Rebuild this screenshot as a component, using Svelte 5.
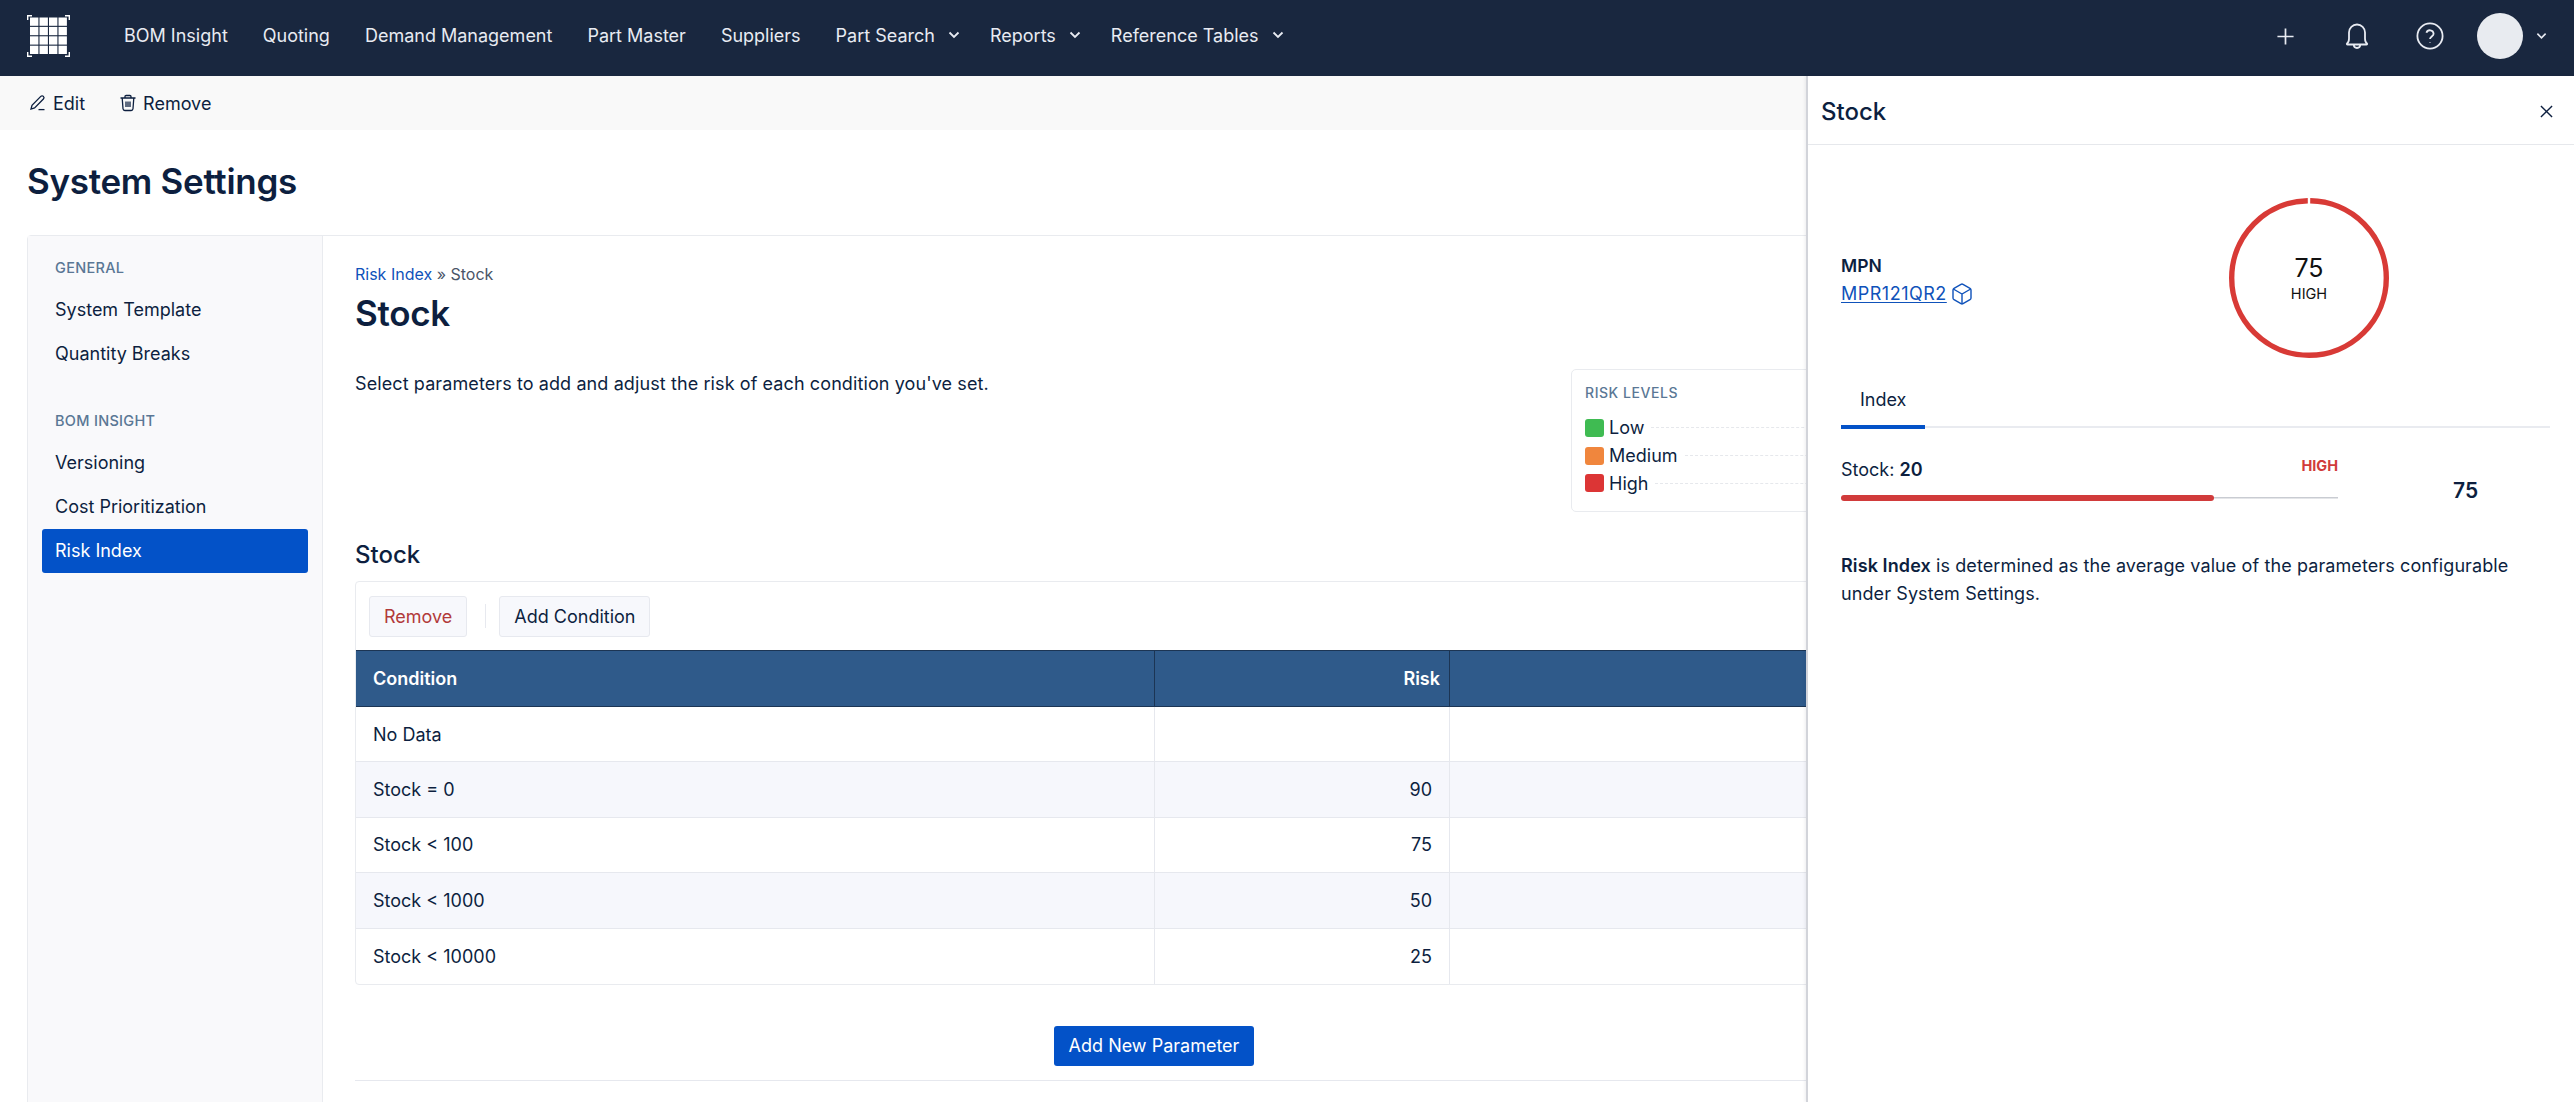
<script>
  const navItems = [
    { label: "BOM Insight" },
    { label: "Quoting" },
    { label: "Demand Management" },
    { label: "Part Master" },
    { label: "Suppliers" },
    { label: "Part Search", menu: true },
    { label: "Reports", menu: true },
    { label: "Reference Tables", menu: true },
  ];
  const sideGroups = [
    { title: "GENERAL", items: ["System Template", "Quantity Breaks"] },
    { title: "BOM INSIGHT", items: ["Versioning", "Cost Prioritization", "Risk Index"] },
  ];
  const levels = [
    { label: "Low", color: "#3fbb52" },
    { label: "Medium", color: "#f0863d" },
    { label: "High", color: "#dc3535" },
  ];
  const rows = [
    { condition: "No Data", risk: "" },
    { condition: "Stock = 0", risk: "90" },
    { condition: "Stock < 100", risk: "75" },
    { condition: "Stock < 1000", risk: "50" },
    { condition: "Stock < 10000", risk: "25" },
  ];
</script>

<div class="page">
  <header class="topbar">
    <svg class="logo" viewBox="0 0 43 42" aria-hidden="true">
      <path d="M0.7 5V0.7H5M38 0.7H42.3V5M42.3 37V41.3H38M5 41.3H0.7V37" fill="none" stroke="#fff" stroke-width="1.4" />
      {#each [0, 1, 2, 3] as r}
        {#each [0, 1, 2, 3] as c}
          <rect x={3 + c * 9.5} y={2.5 + r * 9.4} width="8.4" height="8.3" fill="#fff" />
        {/each}
      {/each}
    </svg>
    <nav class="nav">
      {#each navItems as item}
        <span class="nav__item" class:nav__item--menu={item.menu}>
          {item.label}
          {#if item.menu}
            <svg class="chev" viewBox="0 0 12 8" aria-hidden="true"><path d="M1.5 1.5 6 6l4.5-4.5" /></svg>
          {/if}
        </span>
      {/each}
    </nav>
    <div class="actions">
      <svg class="act act--plus" viewBox="0 0 20 20" aria-hidden="true"><path d="M10 1.5v17M1.5 10h17" /></svg>
      <svg class="act act--bell" viewBox="0 0 24 28" aria-hidden="true">
        <path d="M2 21.5c1.6-1 2-2.4 2-5V10.5a8 8 0 0 1 16 0v6c0 2.6.4 4 2 5 .4.5 0 1-.5 1h-19c-.5 0-.9-.5-.5-1Z" />
        <path d="M8.8 22.8a3.2 3.2 0 0 0 6.4 0" />
      </svg>
      <svg class="act act--help" viewBox="0 0 28 28" aria-hidden="true">
        <circle cx="14" cy="14" r="12.6" />
        <path d="M10.4 10.8a3.7 3.7 0 0 1 7.2 1c0 2.4-3.6 3-3.6 5.2" />
        <path d="M14 20.2v.6" />
      </svg>
      <span class="avatar"></span>
      <svg class="chev chev--user" viewBox="0 0 12 8" aria-hidden="true"><path d="M1.5 1.5 6 6l4.5-4.5" /></svg>
    </div>
  </header>

  <div class="toolbar">
    <span class="tool">
      <svg class="tool__icon" viewBox="0 0 18 18" aria-hidden="true">
        <path d="M11.8 2.4a1.8 1.8 0 0 1 2.6 2.6L5.6 13.9 2 15l1-3.6 8.8-9Z" />
        <path d="M9.5 15.6h6" />
      </svg>
      Edit
    </span>
    <span class="tool">
      <svg class="tool__icon" viewBox="0 0 18 18" aria-hidden="true">
        <path d="M1.5 4h15M6 4V2.6c0-.7.5-1.1 1.1-1.1h3.8c.6 0 1.1.4 1.1 1.1V4" />
        <path d="M3.2 4l.8 10.8c.1 1 .8 1.7 1.8 1.7h6.4c1 0 1.7-.7 1.8-1.7L14.8 4" />
        <path d="M7 7.5v5.5M9 7.5v5.5M11 7.5v5.5" />
      </svg>
      Remove
    </span>
  </div>

  <h1 class="page-title">System Settings</h1>

  <section class="settings">
    <aside class="side">
      {#each sideGroups as group}
        <div class="side__group">
          <div class="side__title">{group.title}</div>
          {#each group.items as item}
            <div class="side__item" class:side__item--active={item === "Risk Index"}>{item}</div>
          {/each}
        </div>
      {/each}
    </aside>

    <main class="content">
      <div class="crumbs"><span class="crumbs__link">Risk Index</span> » Stock</div>
      <h1 class="content__title">Stock</h1>

      <div class="intro">
        <p class="intro__text">Select parameters to add and adjust the risk of each condition you've set.</p>
        <div class="legend">
          <div class="legend__title">RISK LEVELS</div>
          {#each levels as level}
            <div class="legend__row">
              <span class="legend__swatch" style="background: {level.color}"></span>
              <span>{level.label}</span>
              <span class="legend__leader"></span>
            </div>
          {/each}
        </div>
      </div>

      <h2 class="section-title">Stock</h2>
      <div class="table-card">
        <div class="table-tools">
          <button class="btn btn--danger">Remove</button>
          <span class="table-tools__sep"></span>
          <button class="btn">Add Condition</button>
        </div>
        <div class="row row--head">
          <div class="cell">Condition</div>
          <div class="cell cell--risk">Risk</div>
          <div class="cell"></div>
        </div>
        {#each rows as row, i}
          <div class="row" class:row--alt={i % 2 === 1}>
            <div class="cell">{row.condition}</div>
            <div class="cell cell--num">{row.risk}</div>
            <div class="cell"></div>
          </div>
        {/each}
      </div>

      <div class="add-row">
        <button class="btn-primary">Add New Parameter</button>
      </div>
    </main>
  </section>

  <aside class="panel">
    <div class="panel__head">
      <span class="panel__title">Stock</span>
      <svg class="panel__close" viewBox="0 0 14 14" aria-hidden="true"><path d="M1 1l12 12M13 1 1 13" /></svg>
    </div>
    <div class="panel__body">
      <div class="summary">
        <div class="mpn">
          <div class="mpn__label">MPN</div>
          <div class="mpn__value">
            <span class="mpn__link">MPR121QR2</span>
            <svg class="mpn__icon" viewBox="0 0 24 24" aria-hidden="true">
              <path d="M21 8a2 2 0 0 0-1-1.73l-7-4a2 2 0 0 0-2 0l-7 4A2 2 0 0 0 3 8v8a2 2 0 0 0 1 1.73l7 4a2 2 0 0 0 2 0l7-4A2 2 0 0 0 21 16Z" />
              <path d="m3.3 7 8.7 5 8.7-5M12 22V12" />
            </svg>
          </div>
        </div>
        <div class="ring">
          <svg viewBox="0 0 160 160" aria-hidden="true">
            <circle cx="80" cy="80" r="77.3" pathLength="486" stroke-dasharray="483.5 2.5" stroke-dashoffset="-1.25" transform="rotate(-90 80 80)" />
          </svg>
          <span class="ring__num">75</span>
          <span class="ring__label">HIGH</span>
        </div>
      </div>

      <div class="tabs"><span class="tab">Index</span></div>

      <div class="score">
        <div class="score__main">
          <div class="score__top">
            <span>Stock: <b>20</b></span>
            <span class="score__level">HIGH</span>
          </div>
          <div class="bar"><div class="bar__fill" style="width: 75%"></div></div>
        </div>
        <div class="score__num">75</div>
      </div>

      <p class="note"><b>Risk Index</b> is determined as the average value of the parameters configurable under System Settings.</p>
    </div>
  </aside>
</div>

<style>
  :global(body) {
    margin: 0;
    background: #fff;
  }

  .page {
    position: relative;
    width: 2574px;
    height: 1102px;
    overflow: hidden;
    font-family: Inter, "Liberation Sans", sans-serif;
    font-size: 18px;
    color: #0d1f3f;
  }

  .topbar {
    display: flex;
    align-items: center;
    box-sizing: border-box;
    height: 76px;
    padding: 0 0 4px 27px;
    background: #19273f;
    color: #e8ebf2;
  }

  .logo {
    width: 43px;
    height: 42px;
    flex-shrink: 0;
  }

  .nav {
    display: flex;
    align-items: center;
    gap: 35px;
    margin-left: 54px;
    padding-bottom: 2px;
  }

  .nav__item {
    display: flex;
    align-items: center;
    gap: 13px;
    white-space: nowrap;
  }

  .nav__item--menu {
    margin-right: -5px;
  }

  .chev {
    width: 12px;
    height: 8px;
    fill: none;
    stroke: #e8ebf2;
    stroke-width: 1.8;
  }

  .actions {
    display: flex;
    align-items: center;
    margin-left: auto;
  }

  .act {
    fill: none;
    stroke: #e8ebf2;
    stroke-width: 1.8;
  }

  .act--plus { width: 19px; height: 19px; margin-right: 50px; }
  .act--bell { width: 24px; height: 28px; margin-right: 47px; }
  .act--help { width: 28px; height: 28px; margin-right: 33px; }

  .avatar {
    width: 46px;
    height: 46px;
    border-radius: 50%;
    background: #e8ebf0;
  }

  .chev--user {
    margin: 0 27px 0 13px;
    width: 11px;
  }

  .toolbar {
    display: flex;
    align-items: center;
    gap: 34px;
    height: 54px;
    padding-left: 29px;
    background: #f9f9f9;
  }

  .tool {
    display: flex;
    align-items: center;
    gap: 6px;
  }

  .tool__icon {
    width: 18px;
    height: 18px;
    fill: none;
    stroke: #0d1f3f;
    stroke-width: 1.3;
  }

  .page-title {
    margin: 0;
    padding: 29px 27px 0;
    font-size: 35px;
    line-height: 44px;
    font-weight: 600;
    letter-spacing: -0.3px;
  }

  .settings {
    display: flex;
    margin: 32px 0 0 27px;
    height: 900px;
    border: 1px solid #e9ebef;
    border-radius: 4px 0 0 0;
  }

  .side {
    width: 295px;
    flex-shrink: 0;
    box-sizing: border-box;
    padding: 22px 14px 0;
    background: #f9f9fb;
    border-right: 1px solid #e9ebef;
  }

  .side__group {
    margin-bottom: 35px;
  }

  .side__title {
    padding-left: 13px;
    height: 30px;
    line-height: 20px;
    font-size: 14.5px;
    font-weight: 500;
    letter-spacing: 0.02em;
    color: #5a7795;
  }

  .side__item {
    height: 44px;
    line-height: 44px;
    padding-left: 13px;
    border-radius: 3px;
  }

  .side__item--active {
    background: #0352c8;
    color: #fff;
  }

  .content {
    flex: 1;
    padding: 27px 54px 0 32px;
    min-width: 0;
  }

  .crumbs {
    font-size: 16px;
    line-height: 22px;
    color: #4a5568;
  }

  .crumbs__link {
    color: #0f52ba;
  }

  .content__title {
    margin: 0;
    padding-top: 6px;
    font-size: 35px;
    line-height: 44px;
    font-weight: 600;
    letter-spacing: -0.3px;
  }

  .intro {
    display: grid;
    grid-template-columns: 1216px 1fr;
    margin-top: 34px;
  }

  .intro__text {
    margin: 0;
    padding-top: 2px;
    line-height: 26px;
    letter-spacing: 0.1px;
  }

  .legend {
    box-sizing: border-box;
    height: 143px;
    padding: 14px 13px 0;
    border: 1px solid #e9ebef;
    border-radius: 5px;
  }

  .legend__title {
    height: 30px;
    line-height: 18px;
    font-size: 14px;
    font-weight: 500;
    letter-spacing: 0.04em;
    color: #5a7795;
  }

  .legend__row {
    display: flex;
    align-items: center;
    gap: 5px;
    height: 27.7px;
  }

  .legend__swatch {
    width: 19px;
    height: 18px;
    border-radius: 3px;
    flex-shrink: 0;
  }

  .legend__leader {
    flex: 1;
    border-top: 1px dashed #e6e8ec;
    margin-left: 2px;
  }

  .section-title {
    margin: 28px 0 0;
    font-size: 24px;
    line-height: 30px;
    font-weight: 500;
  }

  .table-card {
    margin-top: 11px;
    border: 1px solid #e9ebef;
    border-radius: 4px;
  }

  .table-tools {
    display: flex;
    align-items: center;
    height: 68px;
    padding: 0 13px;
  }

  .btn {
    height: 41px;
    padding: 0 14px;
    background: #f7f8fc;
    border: 1px solid #e7e9ef;
    border-radius: 3px;
    font: inherit;
    color: inherit;
  }

  .btn--danger {
    color: #b23a3a;
  }

  .table-tools__sep {
    width: 1px;
    height: 24px;
    margin: 0 13px 0 18px;
    background: #e7e9ef;
  }

  .row {
    display: grid;
    grid-template-columns: 799px 295px 1fr;
    height: 55.4px;
    box-sizing: border-box;
    border-bottom: 1px solid #e6e8ee;
  }

  .row:last-child {
    border-bottom: 0;
  }

  .row--alt {
    background: #f6f7fc;
  }

  .row--head {
    height: 57px;
    background: #2f5a8a;
    color: #fff;
    font-weight: 600;
    border-top: 1px solid #1c3554;
    border-bottom: 1px solid #1c3554;
  }

  .cell {
    display: flex;
    align-items: center;
    padding: 0 17px;
    border-right: 1px solid #e6e8ee;
  }

  .cell:last-child {
    border-right: 0;
  }

  .row--head .cell {
    border-right-color: #1c3554;
  }

  .cell--num {
    justify-content: flex-end;
  }

  .row--head .cell--risk {
    justify-content: flex-end;
    padding-right: 9px;
  }

  .add-row {
    padding: 41px 0 14px;
    border-bottom: 1px solid #e6e8ee;
  }

  .btn-primary {
    display: block;
    width: 200px;
    height: 40px;
    margin-left: 699px;
    padding: 0;
    background: #0352c8;
    border: 0;
    border-radius: 3px;
    color: #fff;
    font: inherit;
  }

  .panel {
    position: absolute;
    top: 76px;
    bottom: 0;
    left: 1806px;
    right: 0;
    background: #fff;
    border-left: 2px solid #d2d4da;
    box-shadow: -1px 0 3px rgba(20, 30, 50, 0.08);
  }

  .panel__head {
    display: flex;
    align-items: center;
    justify-content: space-between;
    box-sizing: border-box;
    height: 69px;
    padding: 2px 21px 0 13px;
    border-bottom: 1px solid #e6e8ec;
  }

  .panel__title {
    font-size: 24px;
    font-weight: 500;
  }

  .panel__close {
    width: 13px;
    height: 13px;
    fill: none;
    stroke: #0d1f3f;
    stroke-width: 1.5;
  }

  .panel__body {
    padding: 53px 24px 0 33px;
  }

  .summary {
    display: grid;
    grid-template-columns: 388px 160px;
    align-items: center;
  }

  .mpn {
    padding-top: 3px;
  }

  .mpn__label {
    font-weight: 600;
    font-size: 17.5px;
    line-height: 28px;
  }

  .mpn__value {
    display: flex;
    align-items: center;
    gap: 3px;
    line-height: 28px;
  }

  .mpn__link {
    color: #0f52ba;
    text-decoration: underline;
    text-underline-offset: 2px;
    letter-spacing: 0.5px;
  }

  .mpn__icon {
    width: 24px;
    height: 24px;
    fill: none;
    stroke: #0f52ba;
    stroke-width: 1.4;
  }

  .ring {
    position: relative;
    display: flex;
    flex-direction: column;
    align-items: center;
    justify-content: center;
    width: 160px;
    height: 160px;
  }

  .ring svg {
    position: absolute;
    inset: 0;
    fill: none;
    stroke: #d83a36;
    stroke-width: 5.4;
  }

  .ring__num {
    margin-top: -2px;
    font-size: 25px;
    line-height: 34px;
    color: #111;
  }

  .ring__label {
    font-size: 14.5px;
    line-height: 18px;
    color: #111;
  }

  .tabs {
    margin-top: 21px;
    height: 49px;
    border-bottom: 2px solid #e9ebf0;
    box-sizing: border-box;
  }

  .tab {
    display: block;
    box-sizing: border-box;
    width: 84px;
    height: 50px;
    padding: 8px 0 0 19px;
    line-height: 26px;
    border-bottom: 4px solid #0352c8;
  }

  .score {
    display: flex;
    margin-top: 29px;
  }

  .score__main {
    width: 497px;
  }

  .score__top {
    display: flex;
    justify-content: space-between;
    height: 30px;
    line-height: 26px;
  }

  .score__top b {
    font-weight: 600;
  }

  .score__level {
    margin-top: -4px;
    font-size: 14.5px;
    font-weight: 700;
    color: #d13b3b;
  }

  .bar {
    position: relative;
    height: 6px;
    margin-top: 8px;
    background: linear-gradient(#c9ccd2, #c9ccd2) center / 100% 1.5px no-repeat;
  }

  .bar__fill {
    height: 6px;
    border-radius: 3px;
    background: #d13b3b;
  }

  .score__num {
    margin: 21px 0 0 115px;
    font-size: 21px;
    font-weight: 600;
    line-height: 26px;
  }

  .note {
    margin: 48px 0 0;
    width: 690px;
    line-height: 28px;
    letter-spacing: 0.1px;
  }

  .note b {
    font-weight: 600;
  }
</style>
